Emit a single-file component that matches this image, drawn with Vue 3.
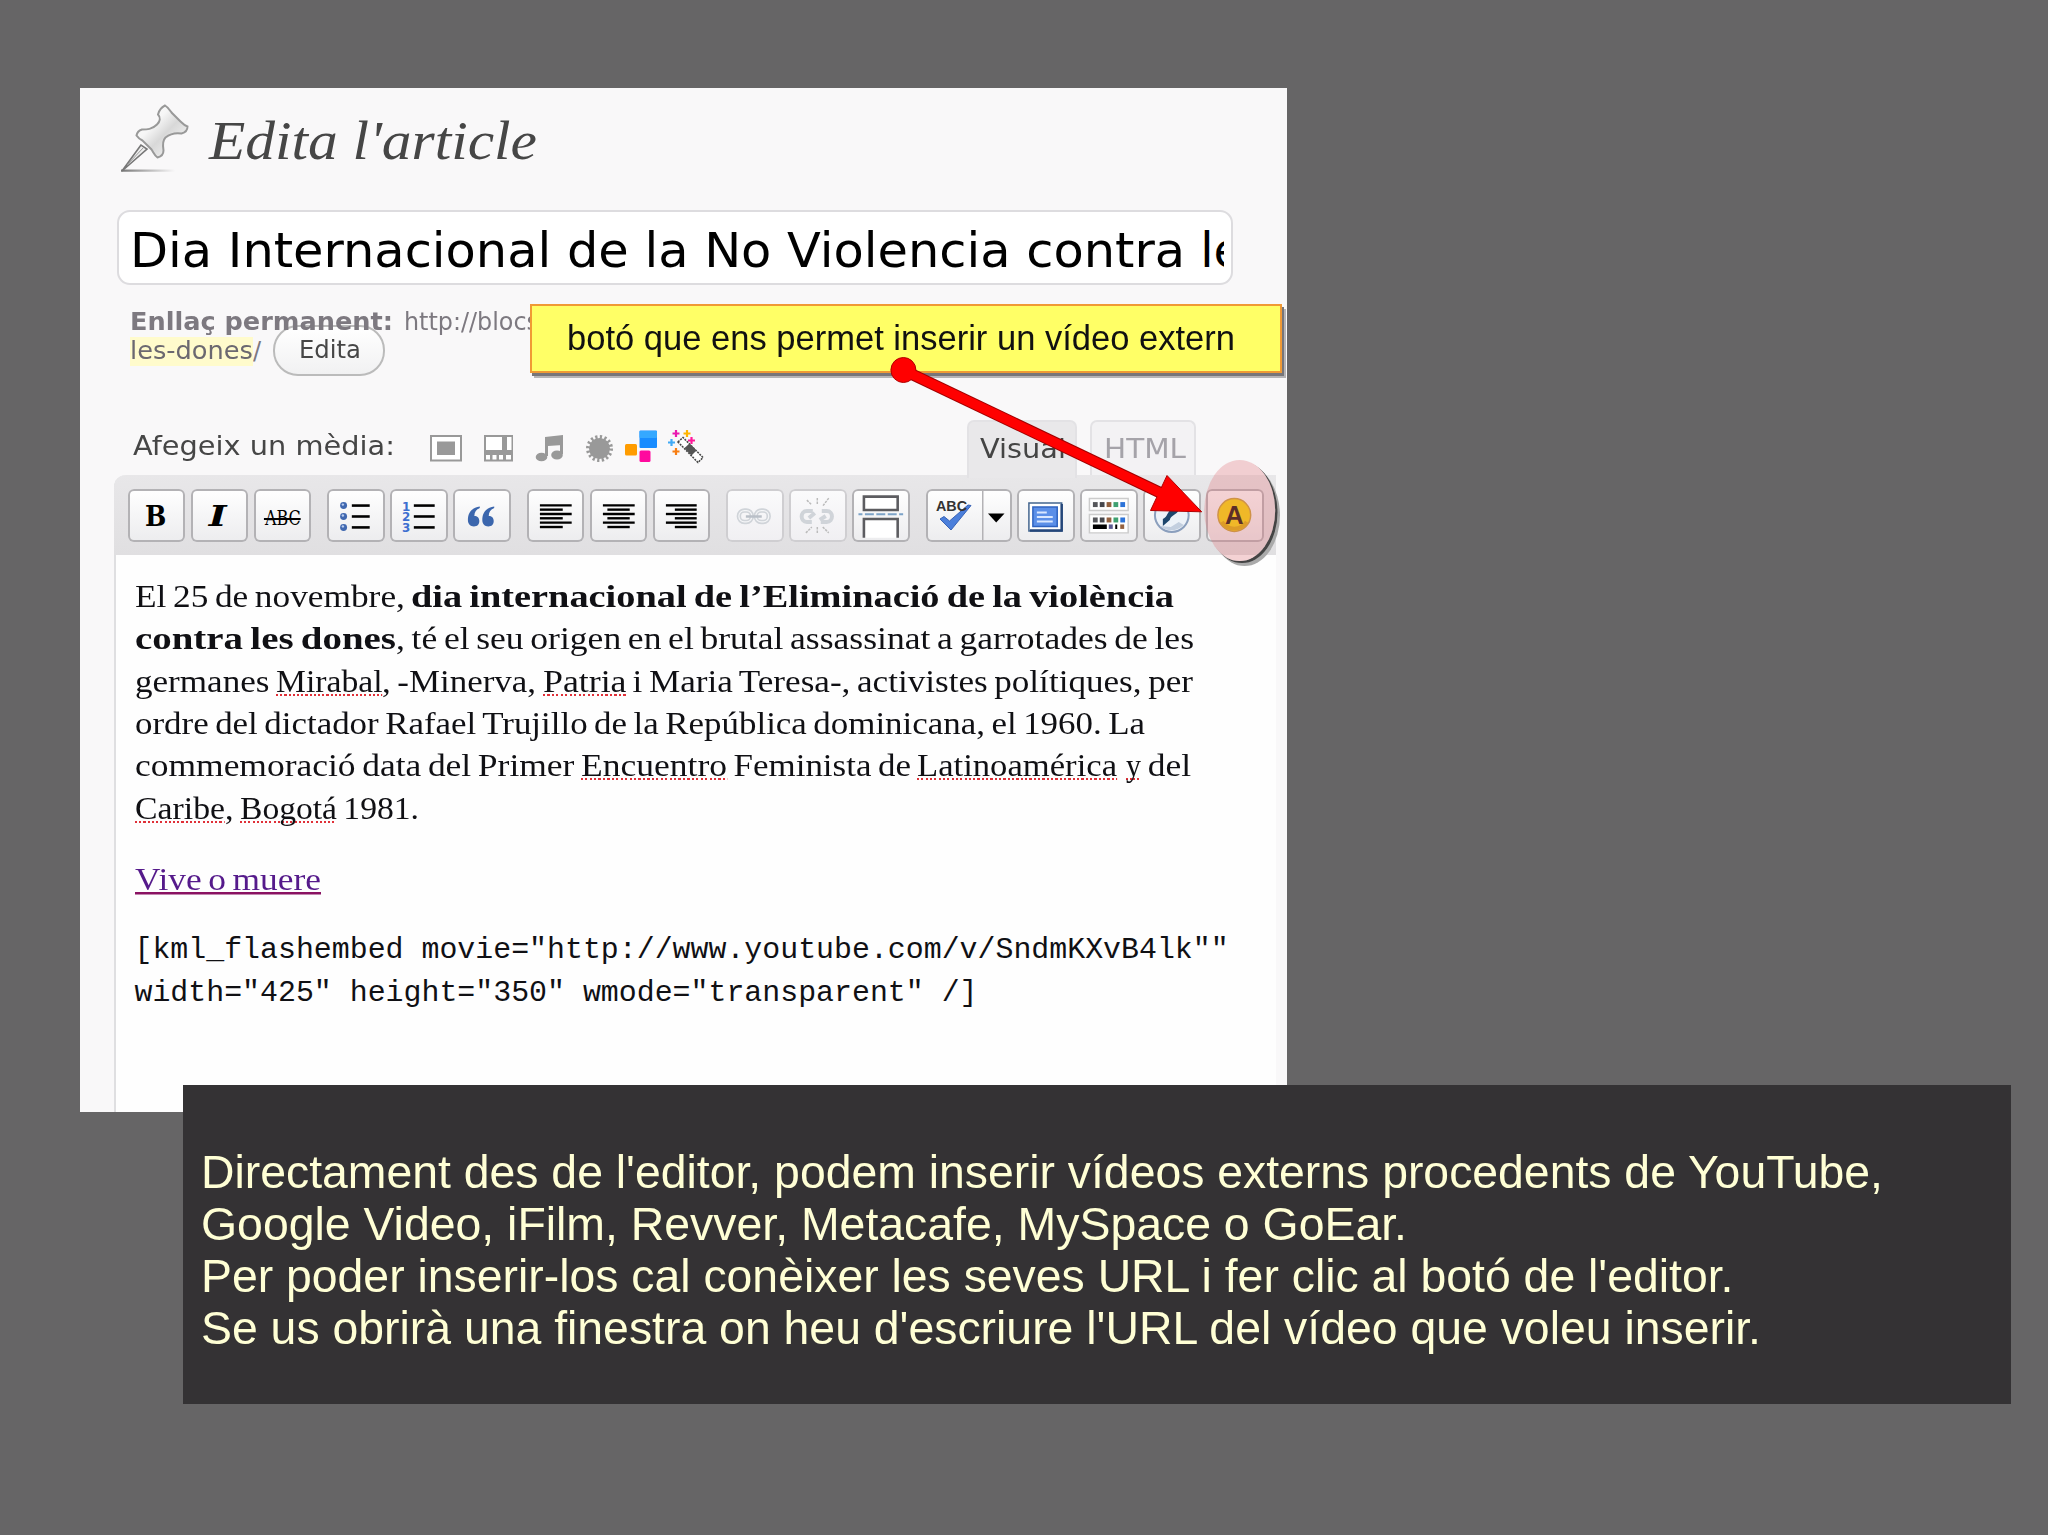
<script setup>
// stretches a run of text to a given width and keeps the flow after it intact
const vFit = {
  mounted(el, { value }) {
    if (!value) return
    const natural = el.getBoundingClientRect().width
    el.style.transform = `scaleX(${value / natural})`
    el.style.marginRight = `${value - natural}px`
  }
}

const lines = [
  [
    { text: 'El 25 de novembre, ', width: 276.5 },
    { text: 'dia internacional de l’Eliminació de la violència', width: 763, type: 'strong' }
  ],
  [
    { text: 'contra les dones', width: 261, type: 'strong' },
    { text: ', té el seu origen en el brutal assassinat a garrotades de les', width: 798 }
  ],
  [
    { text: 'germanes ', width: 141 },
    { text: 'Mirabal', width: 106.5, type: 'typo' },
    { text: ', -Minerva, ', width: 160.5 },
    { text: 'Patria', width: 83.5, type: 'typo' },
    { text: ' i Maria Teresa-, activistes polítiques, per', width: 567 }
  ],
  [
    { text: 'ordre del dictador Rafael Trujillo de la República dominicana, el 1960. La', width: 1010 }
  ],
  [
    { text: 'commemoració data del Primer ', width: 446 },
    { text: 'Encuentro', width: 146, type: 'typo' },
    { text: ' Feminista de ', width: 190.5 },
    { text: 'Latinoamérica', width: 200, type: 'typo' },
    { text: ' ', width: 9 },
    { text: 'y', width: 15, type: 'typo' },
    { text: ' del', width: 50 }
  ],
  [
    { text: 'Caribe', width: 90, type: 'typo' },
    { text: ', ', width: 15 },
    { text: 'Bogotá', width: 97, type: 'typo' },
    { text: ' 1981.', width: 82 }
  ]
]

const code = [
  '[kml_flashembed movie="http://www.youtube.com/v/SndmKXvB4lk""',
  'width="425" height="350" wmode="transparent" /]'
]

const caption = [
  { text: "Directament des de l'editor, podem inserir vídeos externs procedents de YouTube,", width: 1682 },
  { text: 'Google Video, iFilm, Revver, Metacafe, MySpace o GoEar.', width: 1206 },
  { text: "Per poder inserir-los cal conèixer les seves URL i fer clic al botó de l'editor.", width: 1532.5 },
  { text: "Se us obrirà una finestra on heu d'escriure l'URL del vídeo que voleu inserir.", width: 1560 }
]

const groups = [
  ['bold', 'italic', 'strike'],
  ['bullets', 'numbers', 'quote'],
  ['left', 'center', 'right'],
  ['link', 'unlink', 'more'],
  ['spell', 'full', 'kitchen', 'help', 'viper']
]

const rows = [16.3, 20.6, 25, 29.3, 33.7, 38.1]
const align = {
  left: [[13, 45], [13, 36]],
  center: [[13, 45], [17.5, 40]],
  right: [[13, 44], [22, 44]]
}
const colors = ['#55565a', '#45464c', '#93603e', '#3fa070', '#2c73d8']
</script>

<template>
  <div class="slide">
    <section class="shot">
      <header class="head">
        <svg class="pin" width="72" height="72" viewBox="0 0 72 72">
          <defs>
            <linearGradient id="metal" x1="0" y1="0" x2="1" y2="1">
              <stop offset="0" stop-color="#fff" />
              <stop offset=".35" stop-color="#f6f6f6" />
              <stop offset=".55" stop-color="#d8d8d8" />
              <stop offset="1" stop-color="#fff" />
            </linearGradient>
            <linearGradient id="floor">
              <stop offset="0" stop-color="#777" />
              <stop offset="1" stop-color="#777" stop-opacity="0" />
            </linearGradient>
          </defs>
          <path d="M2 66.500h54v2.300H2z" fill="url(#floor)" />
          <path d="M22 42L3 68l25-22z" fill="#eee" stroke="#777" stroke-width="1.600" />
          <path d="M25 44L8 62" stroke="#999" stroke-width="1" />
          <path d="M46 2.500c-4 2-6 5-7 9 3 3 2 7-1 10-5 5-10 5-15 5-3 1-5 3-5.500 6 2 3 4 4 6 5l9 9c2 3 3 6 6 8 4-1 6-3 6-7-1-6-1-10 2-13 5-4 10-5 16-4 4-1 6-3 6-7-3-1-5-3-7-5l-9-9c-2-3-3-5-6.500-7z" fill="url(#metal)" stroke="#999" stroke-width="2" />
        </svg>
        <h1><span v-fit="328">Edita l'article</span></h1>
      </header>

      <div class="title">
        <div class="clip"><span v-fit="1055">Dia Internacional de la No Violencia contra</span><span> les dones</span></div>
      </div>

      <div class="permalink">
        <div class="url"><b v-fit="263">Enllaç permanent:</b><span class="blog" v-fit="135">http://blocs</span></div>
        <div class="url">
          <mark v-fit="123">les-dones</mark><span>/</span>
          <button class="edit"><span v-fit="62">Edita</span></button>
        </div>
      </div>

      <div class="media">
        <span class="label" v-fit="262">Afegeix un mèdia:</span>
        <svg width="280" height="36" viewBox="428 428 280 36">
          <path d="M431 436h30v24.500h-30z" fill="#fff" stroke="#999" stroke-width="2" />
          <path d="M437 441.500h18v13.500h-18z" fill="#999" />
          <path d="M484 435h29v26.500h-29z" fill="#999" />
          <path d="M486 437h16v13h-16zM507 437h4.500v13h-4.500zM486 455h4v4.500h-4zM492.500 455h4v4.500h-4zM499 455h4v4.500h-4zM506 455h5v4.500h-5z" fill="#fff" />
          <path d="M545 437l18-2v10l-15 1v9h-3z" fill="#999" />
          <path d="M546.500 440v16M561.500 438v16" stroke="#999" stroke-width="3" />
          <ellipse cx="541.500" cy="457" rx="5.800" ry="4.300" fill="#999" />
          <ellipse cx="557" cy="455" rx="5.800" ry="4.500" fill="#999" />
          <circle cx="599.500" cy="448.500" r="10.500" fill="#999" />
          <circle cx="599.500" cy="448.500" r="11.500" fill="none" stroke="#999" stroke-width="4" stroke-dasharray="2.200 2.315" />
          <rect x="625" y="444" width="12" height="11.500" rx="1.500" fill="#ff9c00" />
          <rect x="639.500" y="430.500" width="17.500" height="17.500" rx="1" fill="#188cff" />
          <rect x="639.500" y="431" width="17.500" height="7" rx="1" fill="#35a8ff" />
          <rect x="639.500" y="450.500" width="11" height="11.500" rx="1.500" fill="#ff0a9e" />
          <path d="M676 430v7M672.500 433.500h7" stroke="#e91ab0" stroke-width="2.200" />
          <path d="M687 430v7M683.500 433.500h7" stroke="#ffb400" stroke-width="2.200" />
          <path d="M691.500 437v7M688 440.500h7" stroke="#ff1a9a" stroke-width="2.200" />
          <path d="M671.500 439v7M668 442.500h7" stroke="#41aaf5" stroke-width="2.200" />
          <path d="M676 448v7M672.500 451.500h7" stroke="#f77d12" stroke-width="2.200" />
          <path d="M678 442l5-4.500 20 20-5 5z" fill="#fff" stroke="#444" stroke-width="1.500" stroke-dasharray="2 1" />
          <path d="M684.500 448l5-4.500 7 7-5 5z" fill="#555" />
        </svg>
        <div class="tabs">
          <div class="tab active"><span v-fit="86">Visual</span></div>
          <div class="tab"><span v-fit="82">HTML</span></div>
        </div>
      </div>

      <div class="editor">
        <div class="toolbar">
          <div v-for="(group, i) in groups" :key="i" class="group">
            <div v-for="name in group" :key="name" class="button" :class="name">
              <svg width="58" height="53" viewBox="0 0 58 53">
                <text v-if="name === 'bold'" class="serif" x="17" y="37.500" font-size="28" textLength="21.500" lengthAdjust="spacingAndGlyphs">B</text>
                <text v-else-if="name === 'italic'" class="serif slanted" x="18" y="37.500" font-size="28" textLength="18" lengthAdjust="spacingAndGlyphs">I</text>
                <template v-else-if="name === 'strike'">
                  <text class="thin" x="11" y="36" font-size="21" textLength="36" lengthAdjust="spacingAndGlyphs">ABC</text>
                  <path d="M10 30h37" stroke="#000" stroke-width="2" />
                </template>
                <template v-else-if="name === 'bullets'">
                  <g v-for="y in [16.5, 27.5, 38.5]" :key="y">
                    <circle cx="16.700" :cy="y" r="3.500" fill="#4068b0" />
                    <circle cx="16" :cy="y - 1" r="1.200" fill="#b9cdf0" />
                    <path :d="`M25 ${y}h18`" stroke="#000" stroke-width="2.600" />
                  </g>
                </template>
                <template v-else-if="name === 'numbers'">
                  <g v-for="(y, n) in [16.5, 27.5, 38.5]" :key="y">
                    <text class="digit" x="12" :y="y + 5" font-size="12">{{ n + 1 }}</text>
                    <path :d="`M24 ${y}h21`" stroke="#000" stroke-width="2.600" />
                  </g>
                </template>
                <g v-else-if="name === 'quote'" fill="#3b66ad">
                  <path d="M27 17.500c-8 1-12 6-12 13.500 0 4 2.500 6.500 6 6.500s5.500-2 5.500-5.500c0-3-2-5-5-5 0-4 2-6.500 5.500-8z" />
                  <path d="M41.500 17.500c-8 1-12 6-12 13.500 0 4 2.500 6.500 6 6.500s5.500-2 5.500-5.500c0-3-2-5-5-5 0-4 2-6.500 5.500-8z" />
                </g>
                <g v-else-if="align[name]" stroke="#000" stroke-width="2.400">
                  <path v-for="(y, n) in rows" :key="y" :d="`M${align[name][n % 2][0]} ${y}H${align[name][n % 2][1]}`" />
                </g>
                <g v-else-if="name === 'link'" fill="none">
                  <g stroke="#d0d4d9" stroke-width="4.500">
                    <rect x="13" y="21.500" width="13" height="11.500" rx="5.500" />
                    <rect x="30" y="21.500" width="13" height="11.500" rx="5.500" />
                  </g>
                  <g stroke="#f4f5f7" stroke-width="1.200">
                    <rect x="13" y="21.500" width="13" height="11.500" rx="5.500" />
                    <rect x="30" y="21.500" width="13" height="11.500" rx="5.500" />
                  </g>
                  <path d="M20 27.500h16" stroke="#b9bfc7" stroke-width="2.500" />
                </g>
                <g v-else-if="name === 'unlink'" fill="none" stroke="#d0d4d9" stroke-width="4">
                  <path d="M24 22h-6c-7 0-7 11 0 11h5M20 29l6-5M33 22h5c7 0 7 11 0 11h-6M31 31l6-4" />
                  <path d="M18 11l5 5M28.500 9v7M40 9l-6 8M17 44l6-6M28.500 38v7M34 38l6 6" stroke="#bbb" stroke-width="1.500" stroke-dasharray="2.500 1" />
                </g>
                <template v-else-if="name === 'more'">
                  <path d="M12 7.500h34V21H12zM12 49V30h34v19" fill="#fff" stroke="#5c5c60" stroke-width="2.600" />
                  <path d="M6.500 25.300h45" stroke="#7ca3c8" stroke-width="2" stroke-dasharray="4 2.500 9 2.500 9 2.500 9 2.500 4 0" />
                </template>
                <template v-else-if="name === 'spell'">
                  <path d="M14 30l4-2.500 5.500 4.500L42 16l3 .5L25 41z" fill="#4b7fdb" stroke="#3863b5" stroke-width="1" />
                  <text class="abc" x="10" y="22" font-size="15" textLength="31" lengthAdjust="spacingAndGlyphs">ABC</text>
                </template>
                <template v-else-if="name === 'full'">
                  <path d="M12 14h33v28H12z" fill="#fff" stroke="#43658f" stroke-width="1.500" />
                  <path d="M13 41.500h32V15" fill="none" stroke="#24467a" stroke-width="2.500" />
                  <path d="M16 18h24.500v19.500H16z" fill="#5b8fe8" stroke="#2e62c0" stroke-width="1.500" />
                  <path d="M20 23.500h10M20 28h16M20 32.500h16" stroke="#d9e7ff" stroke-width="2" />
                </template>
                <template v-else-if="name === 'kitchen'">
                  <path d="M9.500 9.500h39v12h-39zM9.500 25.500h39V44h-39z" fill="#fff" stroke="#ccc" stroke-width="1.500" />
                  <template v-for="(color, n) in colors" :key="color">
                    <rect :x="13 + n * 6.900" y="13" width="4.800" height="5" :fill="color" />
                    <rect :x="13 + n * 6.900" y="28.500" width="4.800" height="5" :fill="color" />
                  </template>
                  <path d="M13 35.500h14v4.500H13zM35.500 35.500h2v4.500h-2z" fill="#000" />
                  <path d="M29 35.500h4v4.500h-4z" fill="#5a5a90" />
                  <path d="M40.500 35.500h4v4.500h-4z" fill="#93603e" />
                </template>
                <template v-else-if="name === 'help'">
                  <circle cx="29" cy="26" r="17" fill="#edf2f8" stroke="#8b9fbd" stroke-width="2" />
                  <path d="M20 17c6-7 18-4 16 4-2 5-8 5-9 10l-7 6v-7c5-2 4-7 9-10z" fill="#1d466c" />
                  <path d="M17 37c7 6 17 6 24-1l-5-3-8 5z" fill="#c3cfdf" />
                </template>
                <template v-else>
                  <circle cx="28.500" cy="26" r="16.500" fill="#f8d800" stroke="#c8a030" stroke-width="1.500" />
                  <path d="M16 33a15 15 0 0 0 25 0" fill="none" stroke="#dcae00" stroke-width="4" />
                  <text class="letter" x="28.500" y="35" font-size="26" text-anchor="middle">A</text>
                </template>
              </svg>
              <svg v-if="name === 'spell'" class="drop" width="30" height="53" viewBox="0 0 30 53">
                <path d="M.5 1v51" stroke="#b3b2b5" stroke-width="2" />
                <path d="M6 24.500h16.500L14.200 33.500z" />
              </svg>
            </div>
          </div>
        </div>

        <div class="content">
          <p>
            <span v-for="(line, i) in lines" :key="i" class="line"><span v-for="run in line" :key="run.text" v-fit="run.width" :class="run.type">{{ run.text }}</span></span>
          </p>
          <p><a><span v-fit="186">Vive o muere</span></a></p>
          <p class="code">
            <span v-for="line in code" :key="line" class="line">{{ line }}</span>
          </p>
        </div>
      </div>

      <div class="callout"><span v-fit="668">botó que ens permet inserir un vídeo extern</span></div>

      <!-- highlight and arrow lie over the whole editor -->
      <svg class="overlay" width="1207" height="1024" viewBox="80 88 1207 1024">
        <defs>
          <mask id="outside">
            <path d="M1180 440h107v150h-107z" fill="#fff" />
            <ellipse cx="1239.700" cy="510.500" rx="35.500" ry="50.500" fill="#000" />
          </mask>
        </defs>
        <g mask="url(#outside)">
          <ellipse cx="1244.500" cy="515.500" rx="35.500" ry="50.500" fill="#aaa" />
          <ellipse cx="1242" cy="512.500" rx="35.500" ry="50.500" fill="#444" />
        </g>
        <ellipse cx="1239.700" cy="510.500" rx="35.500" ry="50.500" fill="#e0777c" fill-opacity=".32" />
        <path d="M903 370L1165 495" stroke="#a00000" stroke-width="11.500" />
        <path d="M1201.700 511.800L1167 475.500 1150.500 510.500z" fill="#f00" stroke="#b00000" />
        <circle cx="903.400" cy="370" r="12.500" fill="#f00" stroke="#b00000" />
        <path d="M903 370L1165 495" stroke="#f00" stroke-width="9.500" />
      </svg>
    </section>

    <aside class="caption">
      <div v-for="line in caption" :key="line.text"><span v-fit="line.width">{{ line.text }}</span></div>
    </aside>
  </div>
</template>

<style>
body {
  background: #666566;
}
</style>

<style scoped>
.slide {
  width: 2048px;
  height: 1535px;
  overflow: hidden;
  display: flex;
  flex-direction: column;
  align-items: flex-start;
  background: #666566;
  font-family: "DejaVu Sans", sans-serif;
}

.slide span,
.slide b,
.slide mark {
  display: inline-block;
  transform-origin: left;
  white-space: pre;
}

.shot {
  position: relative;
  box-sizing: border-box;
  width: 1207px;
  height: 1024px;
  margin: 88px 0 0 80px;
  overflow: hidden;
  background: #f9f8f9;
}

.head {
  display: flex;
  height: 122px;
  padding-left: 39px;
}

.pin {
  margin-top: 15px;
}

h1 {
  margin: 18px 0 0 18px;
  font: italic 55px/70px Georgia, "Liberation Serif", serif;
  color: #464646;
}

.title {
  box-sizing: border-box;
  width: 1116px;
  height: 75px;
  margin-left: 36.5px;
  padding: 0 7px 0 11.5px;
  border: 2px solid #dddcdf;
  border-radius: 13px;
  background: #fff;
}

.clip {
  overflow: hidden;
  white-space: nowrap;
  font-size: 48px;
  line-height: 77px;
  height: 71px;
  color: #000;
}

.permalink {
  height: 132px;
  padding: 23px 0 0 50px;
  box-sizing: border-box;
  font-size: 24px;
  line-height: 29px;
  color: #7d7980;
}

.url {
  display: flex;
  height: 29px;
}

.blog {
  margin-left: 11px;
}

.url mark {
  background: #fffbcc;
  color: #6b6870;
}

.edit {
  display: flex;
  align-items: center;
  justify-content: center;
  box-sizing: border-box;
  width: 112px;
  height: 51px;
  margin: -12.5px 0 0 12px;
  padding: 0 0 0 1px;
  border: 2px solid #bbb;
  border-radius: 25px;
  background: linear-gradient(#fff, #f1f1f2);
  color: #464646;
  font: 24px "DejaVu Sans", sans-serif;
}

.media {
  display: flex;
  align-items: flex-start;
  height: 58px;
  padding-left: 53px;
}

.label {
  margin-top: 12px;
  font-size: 27px;
  line-height: 34px;
  color: #464646;
}

.media > svg {
  margin: 11px 0 0 33px;
}

.tabs {
  display: flex;
  gap: 13px;
  margin: 3px 0 0 259px;
}

.tab {
  box-sizing: border-box;
  width: 106px;
  height: 55px;
  padding-left: 12px;
  border: 2px solid #e3e2e5;
  border-bottom: 0;
  border-radius: 7px 7px 0 0;
  background: #f3f2f4;
  color: #a5a3a9;
  font-size: 27px;
  line-height: 54px;
}

.tab.active {
  width: 110px;
  height: 58px;
  padding-left: 11px;
  background: #e9e8ea;
  color: #444;
}

.editor {
  box-sizing: border-box;
  width: 1162px;
  height: 640px;
  margin-left: 34px;
  border-left: 2px solid #dfdfe1;
  border-radius: 12px 0 0 0;
  background: #fefefe;
}

.toolbar {
  display: flex;
  gap: 16px;
  box-sizing: border-box;
  height: 80px;
  margin-left: -2px;
  padding: 13.7px 0 0 13.7px;
  border-radius: 12px 0 0 0;
  background: linear-gradient(#e8e7e9, #e0dfe1);
}

.group {
  display: flex;
  gap: 5.4px;
}

.button {
  display: flex;
  width: 57.6px;
  height: 53px;
  border-radius: 6px;
  background: linear-gradient(#fff, #ececee);
  box-shadow: inset 0 0 0 2px #b3b2b5;
}

.button.spell {
  width: 86px;
}

.button.link,
.button.unlink {
  background: linear-gradient(#fbfbfc, #f0eff2);
  box-shadow: inset 0 0 0 2px #cfced1;
}

.drop {
  margin-left: -2px;
}

.serif {
  font-family: "DejaVu Serif", serif;
  font-weight: bold;
}

.slanted {
  font-style: italic;
}

.thin {
  font-family: "DejaVu Serif", serif;
}

.digit {
  font-family: "DejaVu Sans", sans-serif;
  font-weight: bold;
  fill: #3d6fd0;
}

.abc {
  font-family: "Liberation Sans", sans-serif;
  font-weight: bold;
  fill: #333;
}

.letter {
  font-family: "Liberation Sans", sans-serif;
  font-weight: bold;
  fill: #1e0d00;
}

.content {
  padding: 20px 0 0 18.5px;
  color: #101014;
  font: 32px/42.35px Georgia, "Liberation Serif", serif;
  word-spacing: -2px;
}

.content p {
  margin: 0 0 29px;
}

.content .line {
  display: flex;
  height: 42.35px;
}

.strong {
  font-weight: bold;
}

.typo {
  height: 36px;
  background: repeating-linear-gradient(90deg, #e03038 0 2px, transparent 2px 4px) bottom / 100% 2px no-repeat;
}

.content a {
  display: block;
  width: 186px;
  height: 42.35px;
  color: #551a8b;
  background: linear-gradient(#8a1262, #8a1262) 0 34px / 100% 2.5px no-repeat;
}

.code {
  font-family: "Liberation Mono", monospace;
  font-size: 29.9px;
  word-spacing: 0;
}

.callout {
  position: absolute;
  top: 216px;
  left: 449.5px;
  box-sizing: border-box;
  width: 752px;
  height: 69px;
  padding-left: 35px;
  border: 2px solid #f09a35;
  background: #ffff66;
  box-shadow: 2px 3px 0 #77767a, 4px 5px 0 #b5b4b6;
  color: #111;
  font: 35px/64px "Liberation Sans", sans-serif;
}

.overlay {
  position: absolute;
  top: 0;
  left: 0;
}

.caption {
  position: relative;
  box-sizing: border-box;
  width: 1828px;
  height: 319px;
  margin: -27px 0 0 183px;
  padding: 61px 0 0 18px;
  background: #343234;
  color: #ffffd5;
  font: 46.5px/52.1px "Liberation Sans", sans-serif;
}
</style>
